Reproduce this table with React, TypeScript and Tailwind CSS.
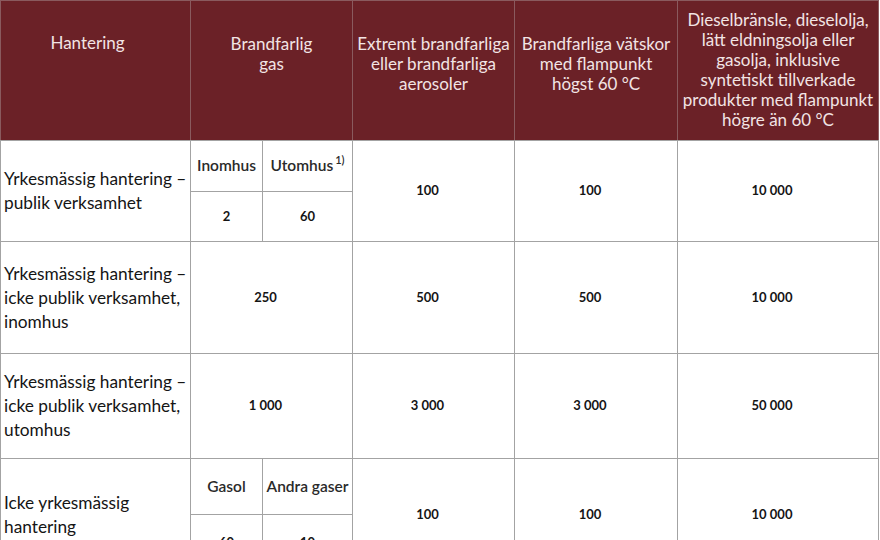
const label = "border border-[#a3a3a3] align-middle pl-[3px] pr-0 whitespace-nowrap text-[17.3px] leading-[24px] text-[#151515]";
const num = "border border-[#a3a3a3] align-middle text-center pr-3 text-[13px] font-bold text-[#151515]";
const val = "border border-[#a3a3a3] align-middle text-center text-[13px] font-bold text-[#151515]";
const sub = "border border-[#a3a3a3] align-middle text-center whitespace-nowrap text-[15.5px] font-semibold text-[#2a2a2a]";
const head = "border border-[#8a5a5e] border-b-[#a3a3a3] align-top text-center whitespace-nowrap text-[17px] leading-[20px] text-[#f2e4e4] font-normal";

export default function App() {
  return (
    <div className="w-[880px] h-[540px] overflow-hidden bg-white" style={{ fontFamily: "Lato, 'Open Sans', sans-serif" }}>
      <table className="table-fixed border-collapse w-[878px]">
        <colgroup>
          <col className="w-[190px]" />
          <col className="w-[72px]" />
          <col className="w-[90px]" />
          <col className="w-[162px]" />
          <col className="w-[163px]" />
          <col className="w-[201px]" />
        </colgroup>
        <thead>
          <tr className="h-[140px] bg-[#6b2127]">
            <th className={`${head} pt-[32px] pr-4`}>Hantering</th>
            <th colSpan={2} className={`${head} pt-[33px]`}>
              Brandfarlig
              <br />
              gas
            </th>
            <th className={`${head} pt-[33px]`}>
              Extremt brandfarliga
              <br />
              eller brandfarliga
              <br />
              aerosoler
            </th>
            <th className={`${head} pt-[33px]`}>
              Brandfarliga vätskor
              <br />
              med flampunkt
              <br />
              högst 60 °C
            </th>
            <th className={`${head} pt-[9px] px-0`}>
              Dieselbränsle, dieselolja,
              <br />
              lätt eldningsolja eller
              <br />
              gasolja, inklusive
              <br />
              syntetiskt tillverkade
              <br />
              produkter med flampunkt
              <br />
              högre än 60 °C
            </th>
          </tr>
        </thead>
        <tbody>
          {/* publik verksamhet */}
          <tr className="h-[51px]">
            <td rowSpan={2} className={label}>
              Yrkesmässig hantering –
              <br />
              publik verksamhet
            </td>
            <td className={sub}>Inomhus</td>
            <td className={sub}>
              Utomhus
              <sup className="text-[11px] relative -top-[7px] ml-[2px]">1)</sup>
            </td>
            <td rowSpan={2} className={num}>100</td>
            <td rowSpan={2} className={num}>100</td>
            <td rowSpan={2} className={num}>10 000</td>
          </tr>
          <tr className="h-[50px]">
            <td className={val}>2</td>
            <td className={val}>60</td>
          </tr>

          {/* icke publik, inomhus */}
          <tr className="h-[112px]">
            <td className={label}>
              Yrkesmässig hantering –
              <br />
              icke publik verksamhet,
              <br />
              inomhus
            </td>
            <td colSpan={2} className={num}>250</td>
            <td className={num}>500</td>
            <td className={num}>500</td>
            <td className={num}>10 000</td>
          </tr>

          {/* icke publik, utomhus */}
          <tr className="h-[105px]">
            <td className={label}>
              Yrkesmässig hantering –
              <br />
              icke publik verksamhet,
              <br />
              utomhus
            </td>
            <td colSpan={2} className={num}>1 000</td>
            <td className={num}>3 000</td>
            <td className={num}>3 000</td>
            <td className={num}>50 000</td>
          </tr>

          {/* icke yrkesmässig */}
          <tr className="h-[56px]">
            <td rowSpan={2} className={label}>
              Icke yrkesmässig
              <br />
              hantering
            </td>
            <td className={sub}>Gasol</td>
            <td className={sub}>Andra gaser</td>
            <td rowSpan={2} className={num}>100</td>
            <td rowSpan={2} className={num}>100</td>
            <td rowSpan={2} className={num}>10 000</td>
          </tr>
          <tr className="h-[56px]">
            <td className={val}>60</td>
            <td className={val}>10</td>
          </tr>
        </tbody>
      </table>
    </div>
  );
}
